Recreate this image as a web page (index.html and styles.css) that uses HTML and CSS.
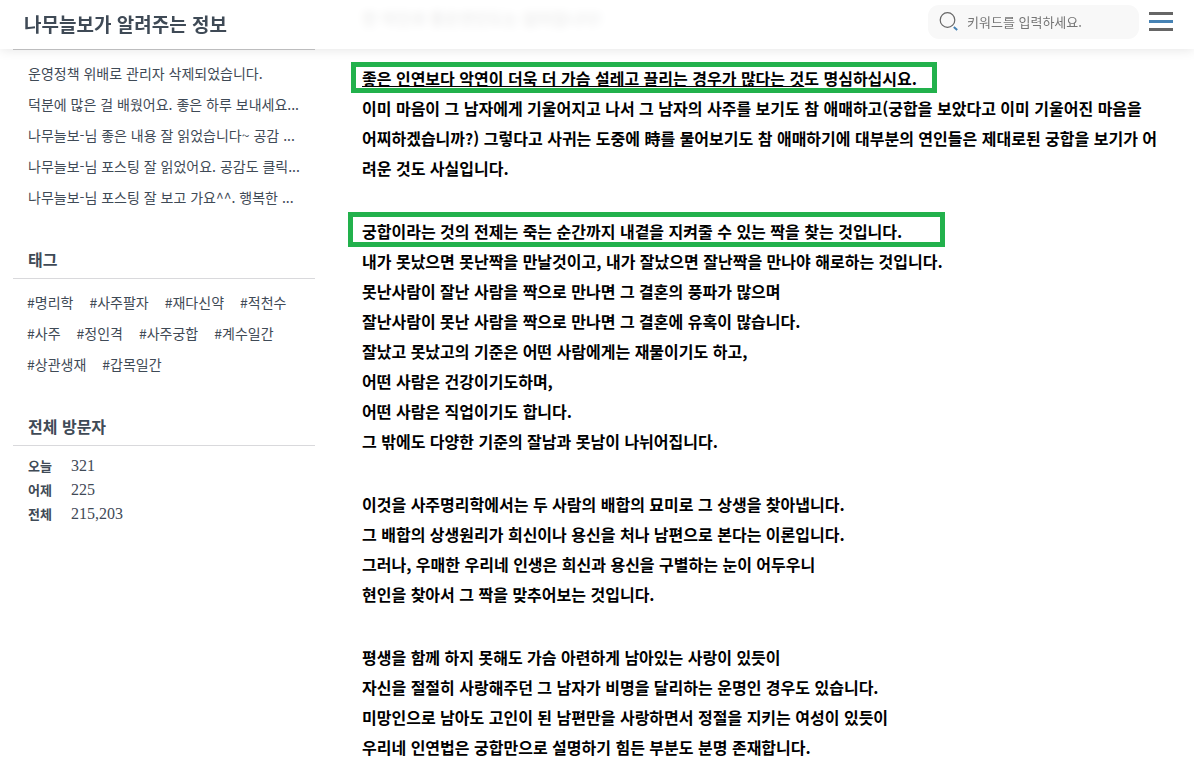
FILE: index.html
```html
<!DOCTYPE html>
<html lang="ko">
<head>
<meta charset="utf-8">
<meta name="viewport" content="width=device-width, initial-scale=1">
<title>나무늘보가 알려주는 정보</title>
<link rel="stylesheet" href="styles.css">
</head>
<body>
<header class="topbar">
  <h1 class="site-title">나무늘보가 알려주는 정보</h1>
  <div class="tools">
    <label class="search">
      <svg class="search-icon" viewBox="0 0 20 20" aria-hidden="true">
        <circle cx="8.5" cy="8" r="7.3" fill="none" stroke="#666" stroke-width="1.2"/>
        <path d="M14.8 15L18.2 18" fill="none" stroke="#4682b4" stroke-width="2"/>
      </svg>
      <input class="search-input" type="text" placeholder="키워드를 입력하세요." aria-label="검색">
    </label>
    <button class="menu" type="button" aria-label="메뉴">
      <span class="bar"></span><span class="bar bar-accent"></span><span class="bar"></span>
    </button>
  </div>
</header>
<div class="layout">
  <aside class="sidebar">
    <section class="widget">
      <ul class="comments">
        <li><a href="#">운영정책 위배로 관리자 삭제되었습니다.</a></li>
        <li><a href="#">덕분에 많은 걸 배웠어요. 좋은 하루 보내세요...</a></li>
        <li><a href="#">나무늘보-님 좋은 내용 잘 읽었습니다~ 공감 ...</a></li>
        <li><a href="#">나무늘보-님 포스팅 잘 읽었어요. 공감도 클릭...</a></li>
        <li><a href="#">나무늘보-님 포스팅 잘 보고 가요^^. 행복한 ...</a></li>
      </ul>
    </section>
    <section class="widget">
      <h2 class="widget-title">태그</h2>
      <div class="tags">
        <a href="#">#명리학</a><a href="#">#사주팔자</a><a href="#">#재다신약</a><a href="#">#적천수</a>
        <a href="#">#사주</a><a href="#">#정인격</a><a href="#">#사주궁합</a><a href="#">#계수일간</a>
        <a href="#">#상관생재</a><a href="#">#갑목일간</a>
      </div>
    </section>
    <section class="widget">
      <h2 class="widget-title">전체 방문자</h2>
      <dl class="visitors">
        <dt>오늘</dt><dd>321</dd>
        <dt>어제</dt><dd>225</dd>
        <dt>전체</dt><dd>215,203</dd>
      </dl>
    </section>
  </aside>
  <main class="article">
    <div class="faded" aria-hidden="true">한 악인과 좋은연인도는 없어집니다!</div>
    <p><span class="mark"><u>좋은 인연보다 악연이 더욱 더 가슴 설레고 끌리는 경우가 많다는 것</u>도 명심하십시요.</span><br>이미 마음이 그 남자에게 기울어지고 나서 그 남자의 사주를 보기도 참 애매하고(궁합을 보았다고 이미 기울어진 마음을<br>어찌하겠습니까?) 그렇다고 사귀는 도중에 時를 물어보기도 참 애매하기에 대부분의 연인들은 제대로된 궁합을 보기가 어<br>려운 것도 사실입니다.</p>
    <p><span class="mark mark-wide">궁합이라는 것의 전제는 죽는 순간까지 내곁을 지켜줄 수 있는 짝을 찾는 것입니다.</span><br>내가 못났으면 못난짝을 만날것이고, 내가 잘났으면 잘난짝을 만나야 해로하는 것입니다.<br>못난사람이 잘난 사람을 짝으로 만나면 그 결혼의 풍파가 많으며<br>잘난사람이 못난 사람을 짝으로 만나면 그 결혼에 유혹이 많습니다.<br>잘났고 못났고의 기준은 어떤 사람에게는 재물이기도 하고,<br>어떤 사람은 건강이기도하며,<br>어떤 사람은 직업이기도 합니다.<br>그 밖에도 다양한 기준의 잘남과 못남이 나뉘어집니다.</p>
    <p>이것을 사주명리학에서는 두 사람의 배합의 묘미로 그 상생을 찾아냅니다.<br>그 배합의 상생원리가 희신이나 용신을 처나 남편으로 본다는 이론입니다.<br>그러나, 우매한 우리네 인생은 희신과 용신을 구별하는 눈이 어두우니<br>현인을 찾아서 그 짝을 맞추어보는 것입니다.</p>
    <p>평생을 함께 하지 못해도 가슴 아련하게 남아있는 사랑이 있듯이<br>자신을 절절히 사랑해주던 그 남자가 비명을 달리하는 운명인 경우도 있습니다.<br>미망인으로 남아도 고인이 된 남편만을 사랑하면서 정절을 지키는 여성이 있듯이<br>우리네 인연법은 궁합만으로 설명하기 힘든 부분도 분명 존재합니다.</p>
  </main>
</div>
</body>
</html>
```
FILE: styles.css
```css
* { box-sizing: border-box; }
body {
  margin: 0;
  background: #fff;
  color: #3f4a56;
  font-family: "Noto Sans CJK KR", sans-serif;
  font-size: 14px;
}
a { color: inherit; text-decoration: none; }
h1, h2, p, ul, dl, dd { margin: 0; padding: 0; }
ul { list-style: none; }

.topbar {
  position: fixed;
  top: 0;
  left: 0;
  right: 0;
  z-index: 1;
  display: flex;
  align-items: center;
  justify-content: space-between;
  height: 49px;
  padding: 0 21px 5px 24px;
  background: rgba(255, 255, 255, 0.93);
  backdrop-filter: blur(4px);
  box-shadow: 0 0 12px rgba(0, 0, 0, 0.12);
}
.site-title { font-size: 19px; line-height: 28px; font-weight: 700; padding-top: 3px; }
.tools { display: flex; align-items: center; gap: 10px; }
.search {
  display: flex;
  align-items: center;
  gap: 8px;
  width: 211px;
  height: 34px;
  padding: 0 11px;
  border-radius: 11px;
  background: #f8f8f8;
}
.search-icon { flex: none; width: 20px; height: 20px; }
.search-input {
  flex: 1;
  min-width: 0;
  padding: 0;
  border: 0;
  outline: 0;
  background: none;
  font: 13px/20px "Noto Sans CJK KR", sans-serif;
}
.search-input::placeholder { color: #757575; }
.menu {
  display: flex;
  flex-direction: column;
  gap: 5px;
  width: 24px;
  padding: 0 0 1px;
  border: 0;
  background: none;
}
.bar { height: 3px; background: #666; }
.bar-accent { background: #4682b4; }

.layout {
  display: grid;
  grid-template-columns: 302px 1fr;
  gap: 47px;
  padding: 0 20px 0 13px;
}
.sidebar { padding-top: 49px; }
.widget { margin-bottom: 34px; }
.comments { padding: 8px 0 0 15px; border-top: 1px solid #c8c8ca; }
.comments li { line-height: 31px; white-space: nowrap; }
.widget-title {
  padding: 0 15px 7px;
  border-bottom: 1px solid #d9d9dc;
  font-size: 16px;
  line-height: 24px;
}
.tags {
  display: flex;
  flex-wrap: wrap;
  column-gap: 16px;
  padding: 8px 15px 0 14px;
  line-height: 31px;
}
.visitors {
  display: grid;
  grid-template-columns: 28px 1fr;
  column-gap: 15px;
  padding: 8px 15px 0;
  line-height: 24px;
}
.visitors dt { font-size: 13px; font-weight: 700; }
.visitors dd { font-family: "Liberation Serif", serif; font-size: 16px; }

.article {
  color: #000;
  font-size: 16px;
  font-weight: 700;
  line-height: 30px;
  white-space: nowrap;
}
.article p + p { margin-top: 33px; }
.faded { height: 63px; padding-top: 3px; }
.mark { position: relative; }
.mark::after {
  content: "";
  position: absolute;
  inset: -4px -20px -3px -11px;
  border: 5px solid #22b14c;
}
.mark-wide::after { inset: -7px -43px -4px -14px; }
```
